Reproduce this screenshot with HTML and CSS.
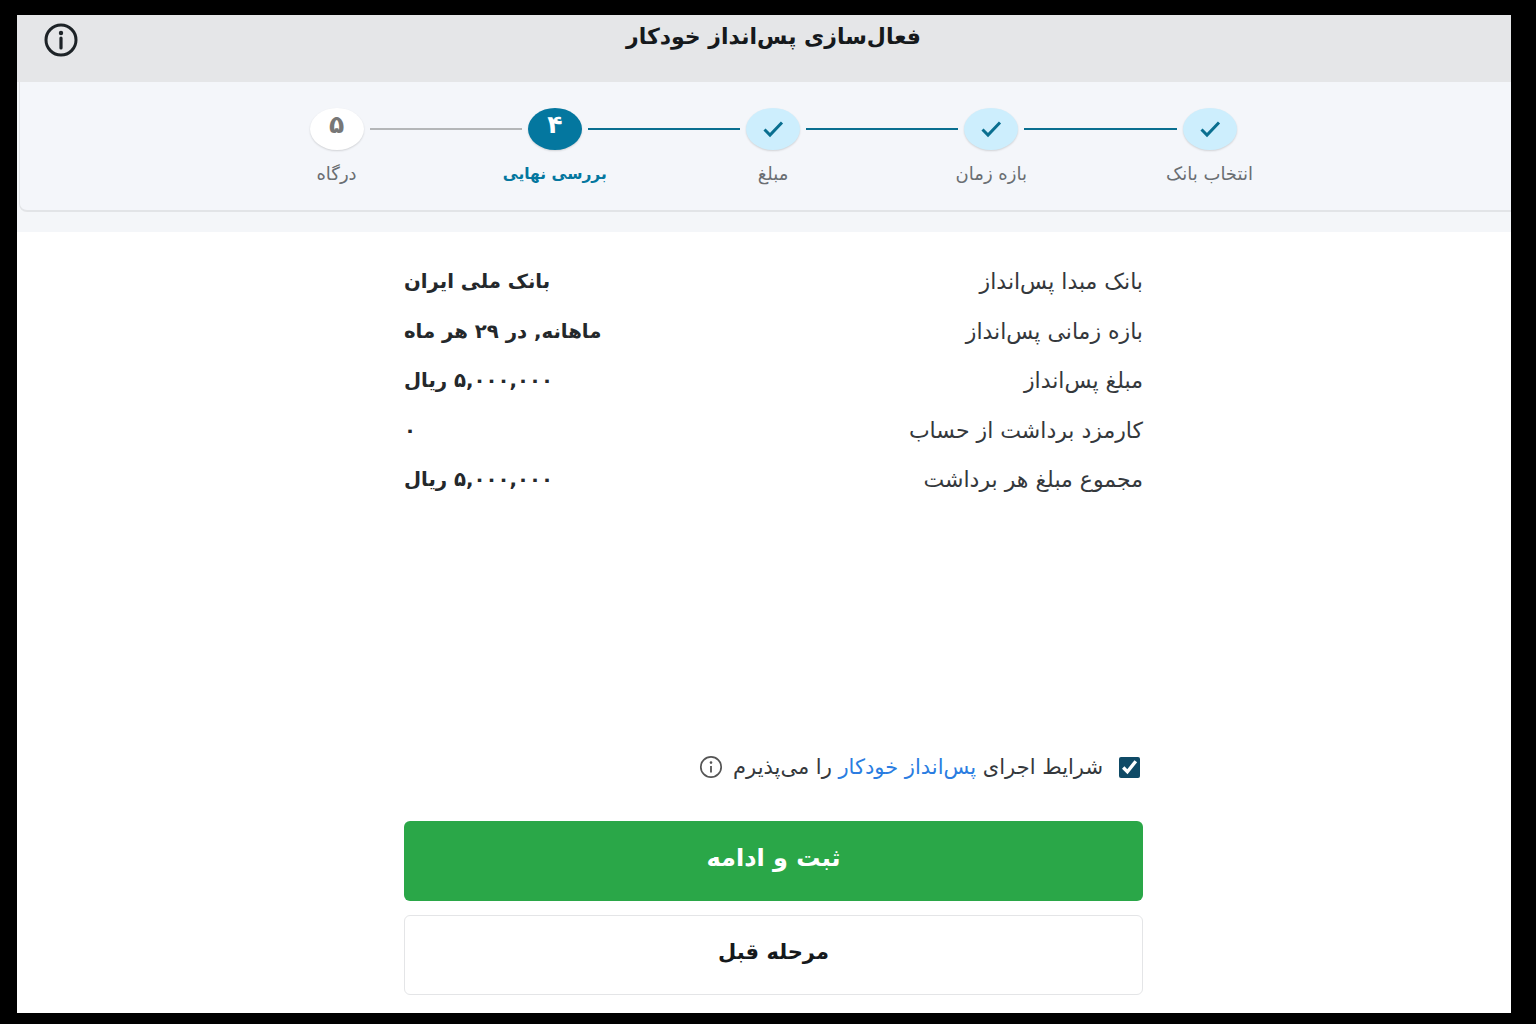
FILE: index.html
```html
<!DOCTYPE html>
<html lang="fa" dir="rtl">
<head>
    <meta charset="UTF-8">
    <title>فعال‌سازی پس‌انداز خودکار</title>
    <link rel="stylesheet" href="styles.css">
</head>
<body>
    <div class="frame">
        <header class="top-bar">
            <h1 class="title">فعال‌سازی پس‌انداز خودکار</h1>
            <svg class="top-info" viewBox="0 0 34 34" width="34" height="34" fill="none">
                <circle cx="17" cy="17" r="15" stroke="#1d2327" stroke-width="3"/>
                <circle cx="17" cy="10" r="2.2" fill="#1d2327"/>
                <path d="M17 15v10" stroke="#1d2327" stroke-width="3.2" stroke-linecap="round"/>
            </svg>
        </header>

        <div class="stepper-band">
            <div class="stepper">
                <div class="step-track">
                    <span class="dot done"><svg viewBox="0 0 24 24" width="24" height="24" fill="none"><path d="M3.5 12.5l5.5 5.5L21 5.5" stroke="#0a6f90" stroke-width="3"/></svg></span>
                    <span class="line"></span>
                    <span class="dot done"><svg viewBox="0 0 24 24" width="24" height="24" fill="none"><path d="M3.5 12.5l5.5 5.5L21 5.5" stroke="#0a6f90" stroke-width="3"/></svg></span>
                    <span class="line"></span>
                    <span class="dot done"><svg viewBox="0 0 24 24" width="24" height="24" fill="none"><path d="M3.5 12.5l5.5 5.5L21 5.5" stroke="#0a6f90" stroke-width="3"/></svg></span>
                    <span class="line"></span>
                    <span class="dot current"><span class="digit">۴</span></span>
                    <span class="line todo"></span>
                    <span class="dot pending"><span class="digit">۵</span></span>
                </div>
                <div class="step-labels">
                    <span>انتخاب بانک</span>
                    <span>بازه زمان</span>
                    <span>مبلغ</span>
                    <span class="active">بررسی نهایی</span>
                    <span>درگاه</span>
                </div>
            </div>
        </div>

        <main class="content">
            <div class="summary">
                <div class="row"><span>بانک مبدا پس‌انداز</span><b>بانک ملی ایران</b></div>
                <div class="row"><span>بازه زمانی پس‌انداز</span><b>ماهانه, در ۲۹ هر ماه</b></div>
                <div class="row"><span>مبلغ پس‌انداز</span><b>۵,۰۰۰,۰۰۰ ریال</b></div>
                <div class="row"><span>کارمزد برداشت از حساب</span><b>۰</b></div>
                <div class="row"><span>مجموع مبلغ هر برداشت</span><b>۵,۰۰۰,۰۰۰ ریال</b></div>
            </div>

            <label class="terms">
                <input type="checkbox" checked>
                <span>شرایط اجرای <a href="#">پس‌انداز خودکار</a> را می‌پذیرم</span>
                <svg viewBox="0 0 24 24" width="24" height="24" fill="none">
                    <circle cx="12" cy="12" r="10.2" stroke="#555" stroke-width="1.7"/>
                    <circle cx="12" cy="7.6" r="1.3" fill="#555"/>
                    <path d="M12 11v6.5" stroke="#555" stroke-width="1.8"/>
                </svg>
            </label>

            <button class="btn primary">ثبت و ادامه</button>
            <button class="btn secondary">مرحله قبل</button>
        </main>
    </div>
</body>
</html>
```
FILE: styles.css
```css
* {
    box-sizing: border-box;
}

html, body {
    height: 100%;
}

body {
    margin: 0;
    padding: 15px 25px 11px 17px;
    background: #000;
    font-family: "DejaVu Sans", "Noto Sans", sans-serif;
    color: #34383c;
    overflow: hidden;
}

.frame {
    height: 998px;
    background: #fff;
    display: flex;
    flex-direction: column;
}

/* Header */
.top-bar {
    height: 67px;
    flex: none;
    background: #e5e6e8;
    display: flex;
    justify-content: space-between;
    align-items: flex-start;
    padding: 8px 590px 0 27px;
}

.title {
    margin: 0;
    font-size: 22px;
    line-height: 28px;
    font-weight: 700;
    color: #15191c;
}

/* Stepper */
.stepper-band {
    flex: none;
    height: 150px;
    background: #f4f6f9;
    padding: 0 0 20px 2px;
}

.stepper {
    height: 130px;
    background: #f4f6fa;
    border-bottom: 2px solid #e2e4e7;
    border-left: 1px solid #e2e4e7;
    border-bottom-left-radius: 8px;
    padding: 26px 0 0 15px;
    display: flex;
    flex-direction: column;
    align-items: center;
}

.step-track {
    display: flex;
    align-items: center;
    gap: 6px;
}

.dot {
    width: 54px;
    height: 42px;
    flex: none;
    border-radius: 50%;
    display: flex;
    align-items: center;
    justify-content: center;
    font-size: 25px;
    font-weight: 700;
    box-shadow: 0 1px 2px rgba(0, 0, 0, 0.15);
}

.digit {
    padding-bottom: 9px;
}

.dot.done {
    background: #cdeefd;
}

.dot.current {
    background: #04779f;
    color: #fff;
}

.dot.pending {
    background: #fff;
    color: #777;
}

.line {
    width: 152.25px;
    height: 2px;
    background: #0a6f90;
}

.line.todo {
    background: #b4b6b8;
}

.step-labels {
    display: grid;
    grid-template-columns: repeat(5, 218.25px);
    justify-items: center;
    margin-top: 11px;
    font-size: 18px;
    line-height: 26px;
    color: #6a6e72;
}

.step-labels .active {
    font-size: 15.5px;
    color: #04779f;
    font-weight: 700;
}

/* Summary */
.content {
    width: 739px;
    margin-right: 368px;
    display: flex;
    flex-direction: column;
    flex: 1;
}

.summary {
    margin-top: 35px;
    display: flex;
    flex-direction: column;
    gap: 19.5px;
}

.row {
    display: flex;
    justify-content: space-between;
    font-size: 22px;
    line-height: 30px;
}

.row b {
    font-size: 19.7px;
    color: #24282b;
}

/* Terms */
.terms {
    margin-top: 257px;
    padding-right: 3px;
    display: flex;
    align-items: center;
    gap: 16px;
    font-size: 21px;
    line-height: 30px;
}

.terms input {
    width: 21px;
    height: 21px;
    margin: 0;
    accent-color: #0f4a66;
}

.terms a {
    color: #2a7de1;
    text-decoration: none;
}

.terms svg {
    margin-right: -6px;
}

/* Buttons */
.btn {
    width: 100%;
    height: 80px;
    flex: none;
    border-radius: 6px;
    font-family: inherit;
    font-weight: 700;
    padding: 0 0 6px;
}

.btn.primary {
    margin-top: 39px;
    background: #2aa748;
    border: none;
    color: #fff;
    font-size: 24px;
}

.btn.secondary {
    margin-top: 14px;
    background: #fff;
    border: 1.5px solid #e4e5e7;
    color: #15191c;
    font-size: 21px;
}
```
